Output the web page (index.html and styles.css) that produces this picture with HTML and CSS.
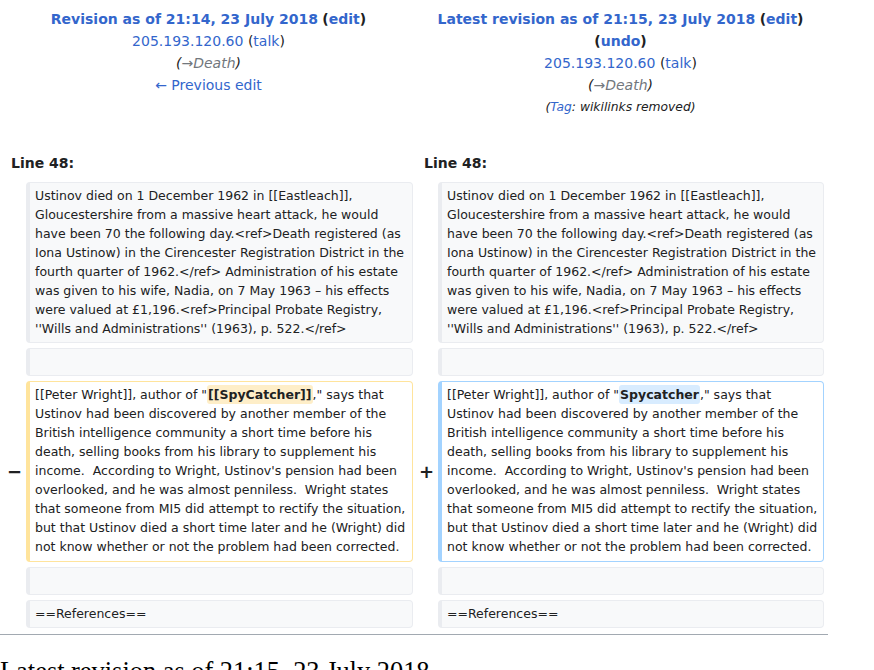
FILE: index.html
```html
<!DOCTYPE html>
<html>
<head>
<meta charset="utf-8">
<link rel="stylesheet" href="styles.css">
</head>
<body>
<table class="diff">
  <colgroup>
    <col class="c-marker-l"><col class="c-content-l"><col class="c-marker-r"><col class="c-content-r">
  </colgroup>
  <tr class="head-row">
    <td colspan="2" class="otitle">
      <div class="hl"><a class="bold">Revision as of 21:14, 23 July 2018</a> <span class="bold dark">(<a>edit</a>)</span></div>
      <div class="hl"><a>205.193.120.60</a> <span class="dark">(<a>talk</a>)</span></div>
      <div class="hl"><i class="dark">(<a class="grey">→</a><span class="grey">Death</span>)</i></div>
      <div class="hl"><a>← Previous edit</a></div>
    </td>
    <td colspan="2" class="ntitle">
      <div class="hl"><a class="bold">Latest revision as of 21:15, 23 July 2018</a> <span class="bold dark">(<a>edit</a>)</span></div>
      <div class="hl"><span class="bold dark">(<a>undo</a>)</span></div>
      <div class="hl"><a>205.193.120.60</a> <span class="dark">(<a>talk</a>)</span></div>
      <div class="hl"><i class="dark">(<a class="grey">→</a><span class="grey">Death</span>)</i></div>
      <div class="hl small"><i class="dark">(<a>Tag</a>: wikilinks removed)</i></div>
    </td>
  </tr>
  <tr>
    <td colspan="2" class="lineno">Line 48:</td>
    <td colspan="2" class="lineno">Line 48:</td>
  </tr>
  <tr>
    <td class="marker"></td>
    <td class="box ctx">Ustinov died on 1 December 1962 in [[Eastleach]], Gloucestershire from a massive heart attack, he would have been 70 the following day.&lt;ref&gt;Death registered (as Iona Ustinow) in the Cirencester Registration District in the fourth quarter of 1962.&lt;/ref&gt; Administration of his estate was given to his wife, Nadia, on 7 May 1963 – his effects were valued at £1,196.&lt;ref&gt;Principal Probate Registry, ''Wills and Administrations'' (1963), p. 522.&lt;/ref&gt;</td>
    <td class="marker"></td>
    <td class="box ctx">Ustinov died on 1 December 1962 in [[Eastleach]], Gloucestershire from a massive heart attack, he would have been 70 the following day.&lt;ref&gt;Death registered (as Iona Ustinow) in the Cirencester Registration District in the fourth quarter of 1962.&lt;/ref&gt; Administration of his estate was given to his wife, Nadia, on 7 May 1963 – his effects were valued at £1,196.&lt;ref&gt;Principal Probate Registry, ''Wills and Administrations'' (1963), p. 522.&lt;/ref&gt;</td>
  </tr>
  <tr>
    <td class="marker"></td>
    <td class="box ctx"><br></td>
    <td class="marker"></td>
    <td class="box ctx"><br></td>
  </tr>
  <tr>
    <td class="marker">−</td>
    <td class="box del">[[Peter Wright]], author of "<del class="chg-del">[[SpyCatcher]]</del>," says that Ustinov had been discovered by another member of the British intelligence community a short time before his death, selling books from his library to supplement his income.&nbsp; According to Wright, Ustinov's pension had been overlooked, and he was almost penniless.&nbsp; Wright states that someone from MI5 did attempt to rectify the situation, but that Ustinov died a short time later and he (Wright) did not know whether or not the problem had been corrected.</td>
    <td class="marker">+</td>
    <td class="box add">[[Peter Wright]], author of "<ins class="chg-add">Spycatcher</ins>," says that Ustinov had been discovered by another member of the British intelligence community a short time before his death, selling books from his library to supplement his income.&nbsp; According to Wright, Ustinov's pension had been overlooked, and he was almost penniless.&nbsp; Wright states that someone from MI5 did attempt to rectify the situation, but that Ustinov died a short time later and he (Wright) did not know whether or not the problem had been corrected.</td>
  </tr>
  <tr>
    <td class="marker"></td>
    <td class="box ctx"><br></td>
    <td class="marker"></td>
    <td class="box ctx"><br></td>
  </tr>
  <tr>
    <td class="marker"></td>
    <td class="box ctx">==References==</td>
    <td class="marker"></td>
    <td class="box ctx">==References==</td>
  </tr>
</table>
<hr class="rule">
<h2 class="latest">Latest revision as of 21:15, 23 July 2018</h2>
</body>
</html>
```

FILE: styles.css
```css
html, body {
  margin: 0;
  padding: 0;
  background: #fff;
}
body {
  font-family: "DejaVu Sans", sans-serif;
  font-size: 14px;
  color: #202122;
}
a {
  color: #3366cc;
  text-decoration: none;
}
.diff {
  width: 828px;
  border-spacing: 4px 5px;
  border: 0;
  table-layout: fixed;
}
.c-marker-l { width: 18px; }
.c-content-l { width: 387px; }
.c-marker-r { width: 17px; }
.c-content-r { width: 386px; }
.head-row td {
  text-align: center;
  vertical-align: top;
  padding: 3px 0 0 0;
}
.hl {
  line-height: 22px;
  white-space: nowrap;
}
.hl.small {
  font-size: 12.3px;
}
.bold { font-weight: bold; }
.dark { color: #202122; }
.grey { color: #72777d; }
.lineno {
  font-weight: bold;
  padding: 30px 0 4px 7px;
  height: 20px;
  line-height: 20px;
  vertical-align: bottom;
}
.marker {
  text-align: right;
  font-weight: bold;
  font-size: 18px;
  padding: 0;
  vertical-align: middle;
  color: #202122;
}
.box {
  font-size: 12.5px;
  line-height: 19px;
  padding: 3px 3px 4px 5px;
  border: 1px solid #eaecf0;
  border-left-width: 4px;
  border-radius: 4px;
  vertical-align: top;
  word-wrap: break-word;
  white-space: pre-wrap;
}
.box.ctx {
  background: #f8f9fa;
  color: #202122;
}
.box.del {
  border-color: #ffe49c;
  background: #fff;
  padding-bottom: 5px;
}
.box.add {
  border-color: #a3d3ff;
  background: #fff;
  padding-bottom: 5px;
}
.chg-del, .chg-add {
  font-weight: bold;
  text-decoration: none;
  border-radius: 3px;
  padding: 2px 1px;
}
.chg-del { background: #feeec8; }
.chg-add { background: #d8ecff; }
.rule {
  width: 828px;
  margin: 1px 0 0 0;
  border: 0;
  border-top: 1px solid #a2a9b1;
  height: 0;
}
.latest {
  font-family: "Liberation Serif", "DejaVu Serif", serif;
  font-weight: normal;
  font-size: 26.4px;
  margin: 19px 0 0 0;
  line-height: 1.3;
  color: #000;
}
```
